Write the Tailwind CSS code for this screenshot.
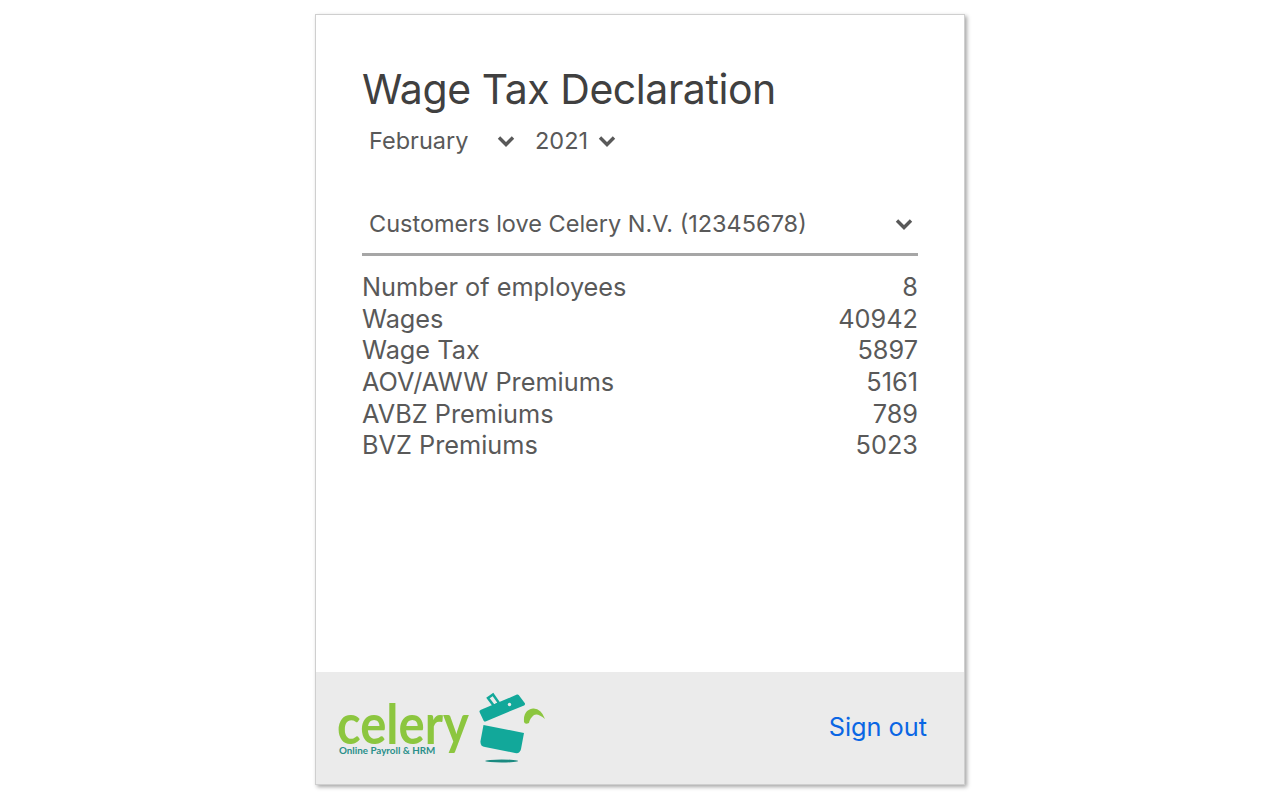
<!DOCTYPE html>
<html lang="en">
<head>
    <meta charset="UTF-8">
    <meta name="viewport" content="width=device-width, initial-scale=1.0">
    <title>Wage Tax Declaration</title>
    <script src="https://cdn.jsdelivr.net/npm/@tailwindcss/browser@4"></script>
</head>
<body class="bg-white h-[800px] overflow-hidden font-['Inter',Arial,sans-serif]">
    <div class="w-[650px] h-[771px] mt-[14px] ml-[315px] bg-white border border-[#cfcfcf] shadow-[2px_2px_4px_rgba(0,0,0,0.35)] flex flex-col">
        <main class="flex-1 pl-[46px] pr-[46px] pt-[47px] text-[#595959]">
            <h1 class="text-[41px] leading-[54px] tracking-[-0.45px] text-[#404040]">Wage Tax Declaration</h1>
            <div class="flex items-center h-[32px] mt-[9px] pl-[7px] text-[23.5px]">
                <span class="w-[128px]">February</span>
                <svg class="w-[18px] h-[12px] mr-[20px]" viewBox="0 0 18 12" fill="none" stroke="#595959" stroke-width="3.4"><path d="M2 2.5l7 7 7-7"/></svg>
                <span class="w-[63px]">2021</span>
                <svg class="w-[18px] h-[12px]" viewBox="0 0 18 12" fill="none" stroke="#595959" stroke-width="3.4"><path d="M2 2.5l7 7 7-7"/></svg>
            </div>
            <div class="flex items-center justify-between h-[48px] mt-[43px] pl-[7px] pr-[5px] border-b-[3px] border-[#a6a6a6] text-[23.5px] box-content pb-[5px]">
                <span>Customers love Celery N.V. (12345678)</span>
                <svg class="w-[18px] h-[12px]" viewBox="0 0 18 12" fill="none" stroke="#595959" stroke-width="3.4"><path d="M2 2.5l7 7 7-7"/></svg>
            </div>
            <dl class="mt-[15px] text-[25.3px] leading-[31.67px]">
                <div class="flex justify-between"><dt>Number of employees</dt><dd>8</dd></div>
                <div class="flex justify-between"><dt>Wages</dt><dd>40942</dd></div>
                <div class="flex justify-between"><dt>Wage Tax</dt><dd>5897</dd></div>
                <div class="flex justify-between"><dt>AOV/AWW Premiums</dt><dd>5161</dd></div>
                <div class="flex justify-between"><dt>AVBZ Premiums</dt><dd>789</dd></div>
                <div class="flex justify-between"><dt>BVZ Premiums</dt><dd>5023</dd></div>
            </dl>
        </main>
        <footer class="h-[112px] bg-[#ebebeb] flex items-center justify-between pl-[21px] pr-[37px]">
            <div class="relative w-[210px] h-[80px]">
                <span class="absolute left-0 top-[15px] origin-left scale-x-[0.875] text-[#8cc63f] text-[56px] leading-[40px] font-bold font-['Lato',sans-serif]">celery</span>
                <span class="absolute left-[2px] top-[56px] text-[#2a8f8a] text-[9.8px] leading-[12px] font-bold font-['Lato',sans-serif] whitespace-nowrap">Online Payroll &amp; HRM</span>
                <svg class="absolute left-[133px] top-[-3px]" width="85" height="85" viewBox="0 0 85 85">
                    <path d="M18 13l5-3.500 6 8.500-5 3z" fill="none" stroke="#12a89a" stroke-width="2.5"/>
                    <path d="M11 26.500L47.500 11l6 8L15 35z" fill="#12a89a" stroke="#12a89a" stroke-width="3" stroke-linejoin="round"/>
                    <circle cx="39.500" cy="19.500" r="1.700" fill="#ebebeb"/>
                    <path d="M13.500 40L54 48l-3 16q-1 5-6 4l-30-6q-5-1-4.500-6z" fill="#12a89a"/>
                    <ellipse cx="31.700" cy="76" rx="16.500" ry="1.500" fill="#1a8a80"/>
                    <path d="M54 37q-1-12 9-13.500q8-.500 12 10.500q-7-6-11-4q-4 3-5 8q-4 2-5-1z" fill="#8cc63f"/>
                </svg>
            </div>
            <a class="text-[25.3px] leading-[30px] mb-[3px] text-[#0a66e4]" href="#">Sign out</a>
        </footer>
    </div>
</body>
</html>
